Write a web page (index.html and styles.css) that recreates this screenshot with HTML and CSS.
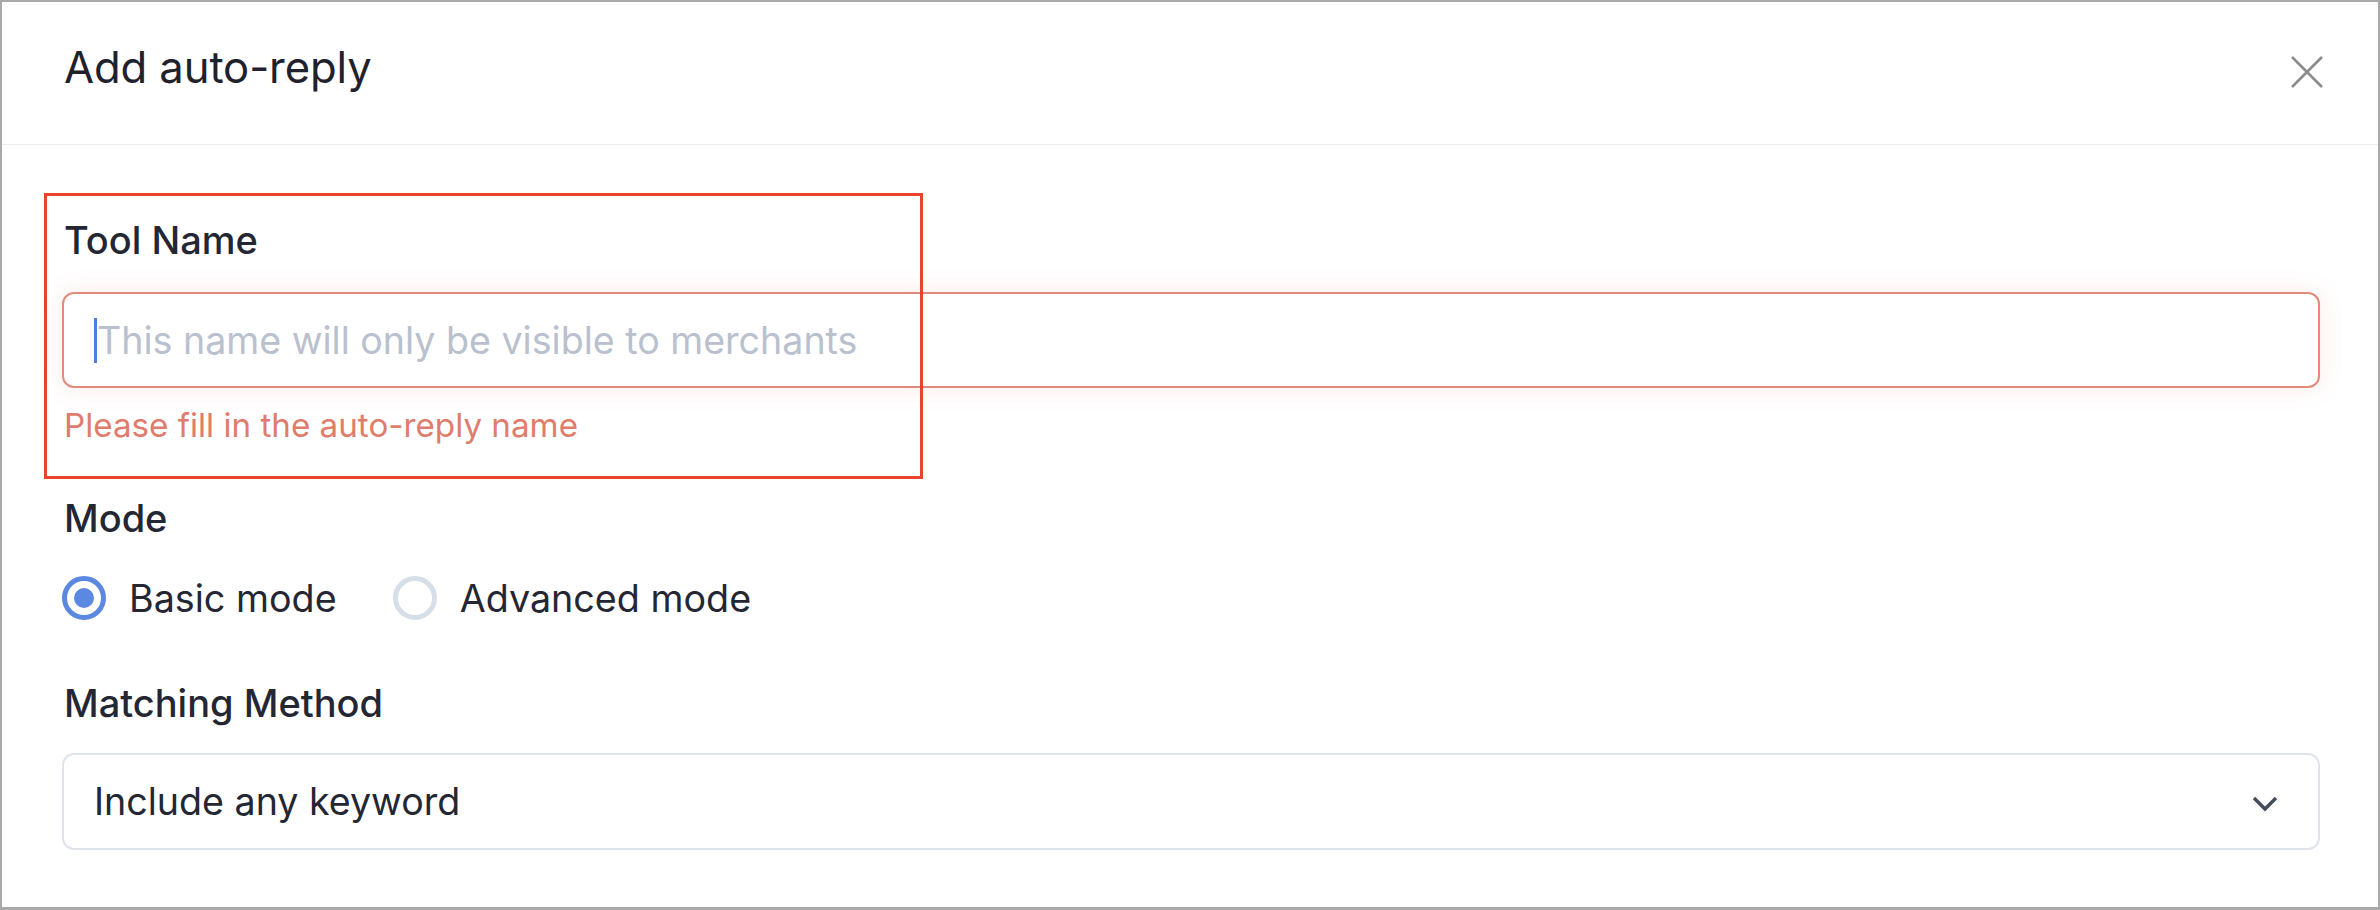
FILE: index.html
```html
<!DOCTYPE html>
<html lang="en">
<head>
<meta charset="utf-8">
<title>Add auto-reply</title>
<link rel="stylesheet" href="styles.css">
</head>
<body>
<div class="frame">
  <header class="dialog-header">
    <h2 class="dialog-title">Add auto-reply</h2>
    <button class="close-btn" type="button" aria-label="Close">
      <svg width="34" height="34" viewBox="0 0 34 34"><path d="M2 2 L32 32 M32 2 L2 32" stroke="#8b8b8b" stroke-width="2.6" fill="none"/></svg>
    </button>
  </header>
  <div class="dialog-body">
    <div class="field field-name">
      <div class="field-label">Tool Name</div>
      <div class="text-input is-error">
        <span class="caret"></span><span class="placeholder">This name will only be visible to merchants</span>
      </div>
      <div class="field-error">Please fill in the auto-reply name</div>
    </div>
    <div class="field field-mode">
      <div class="field-label">Mode</div>
      <div class="radio-group">
        <label class="radio-item"><span class="radio checked"></span><span class="radio-text">Basic mode</span></label>
        <label class="radio-item"><span class="radio"></span><span class="radio-text">Advanced mode</span></label>
      </div>
    </div>
    <div class="field field-match">
      <div class="field-label">Matching Method</div>
      <div class="select">
        <span class="select-value">Include any keyword</span>
        <svg class="chevron" width="26" height="16" viewBox="0 0 26 16"><path d="M2 2 L13 13 L24 2" stroke="#454b59" stroke-width="3.4" fill="none"/></svg>
      </div>
    </div>
  </div>
  <div class="annotation"></div>
</div>
</body>
</html>
```

FILE: styles.css
```css
* { box-sizing: border-box; }
html, body { margin: 0; padding: 0; background: #ffffff; }
body { font-family: "Inter", "Noto Sans", "Liberation Sans", sans-serif; color: #242733; }

.frame {
  position: relative;
  width: 2380px;
  height: 910px;
  border: 2px solid #a9a9a9;
  border-bottom-width: 3px;
  background: #ffffff;
  overflow: hidden;
}

.dialog-header {
  height: 143px;
  border-bottom: 1px solid #ececee;
  display: flex;
  align-items: center;
  justify-content: space-between;
  padding: 0 54px 10px 62px;
}
.dialog-title {
  margin: 0;
  font-size: 43.6px;
  line-height: 54px;
  font-weight: 400;
  color: #1f222d;
  letter-spacing: -0.1px;
}
.close-btn {
  border: 0;
  background: none;
  padding: 0;
  margin-top: 8px;
  width: 34px;
  height: 34px;
  display: flex;
}

.dialog-body {
  padding: 71px 58px 0 60px;
}

.field-label {
  font-size: 38px;
  line-height: 48px;
  font-weight: 500;
  color: #242733;
  padding-left: 2px;
}

.field-name .field-label { margin-bottom: 28px; }

.text-input {
  height: 96px;
  border: 2px solid #e38a7b;
  border-radius: 12px;
  display: flex;
  align-items: center;
  padding-left: 30px;
  box-shadow: 0 0 24px rgba(230, 110, 90, 0.14);
}
.caret {
  width: 3px;
  height: 45px;
  background: #4e7be6;
}
.placeholder {
  font-size: 37.6px;
  color: #b9c0ce;
}
.field-error {
  margin-top: 15px;
  font-size: 33.2px;
  line-height: 44px;
  color: #df7c6b;
  padding-left: 2px;
}

.field-mode { margin-top: 47px; }
.radio-group {
  margin-top: 32px;
  display: flex;
  align-items: center;
  gap: 56px;
  height: 48px;
}
.radio-item {
  display: flex;
  align-items: center;
  gap: 23px;
}
.radio {
  width: 44px;
  height: 44px;
  border-radius: 50%;
  border: 5px solid #d6dee7;
  display: flex;
  align-items: center;
  justify-content: center;
}
.radio.checked { border-color: #5b88e1; }
.radio.checked::after {
  content: "";
  width: 20px;
  height: 20px;
  border-radius: 50%;
  background: #5b88e1;
}
.radio-text {
  font-size: 37.7px;
  line-height: 48px;
  color: #242733;
}

.field-match { margin-top: 57px; }
.field-match .field-label { margin-bottom: 26px; }
.select {
  height: 97px;
  border: 2px solid #dfe4ec;
  border-radius: 12px;
  display: flex;
  align-items: center;
  justify-content: space-between;
  padding: 0 40px 0 30px;
}
.select-value {
  font-size: 37.6px;
  color: #242733;
}
.chevron { margin-top: 4px; }

.annotation {
  position: absolute;
  left: 42px;
  top: 191px;
  width: 879px;
  height: 286px;
  border: 3px solid #e8432d;
  pointer-events: none;
}
```
